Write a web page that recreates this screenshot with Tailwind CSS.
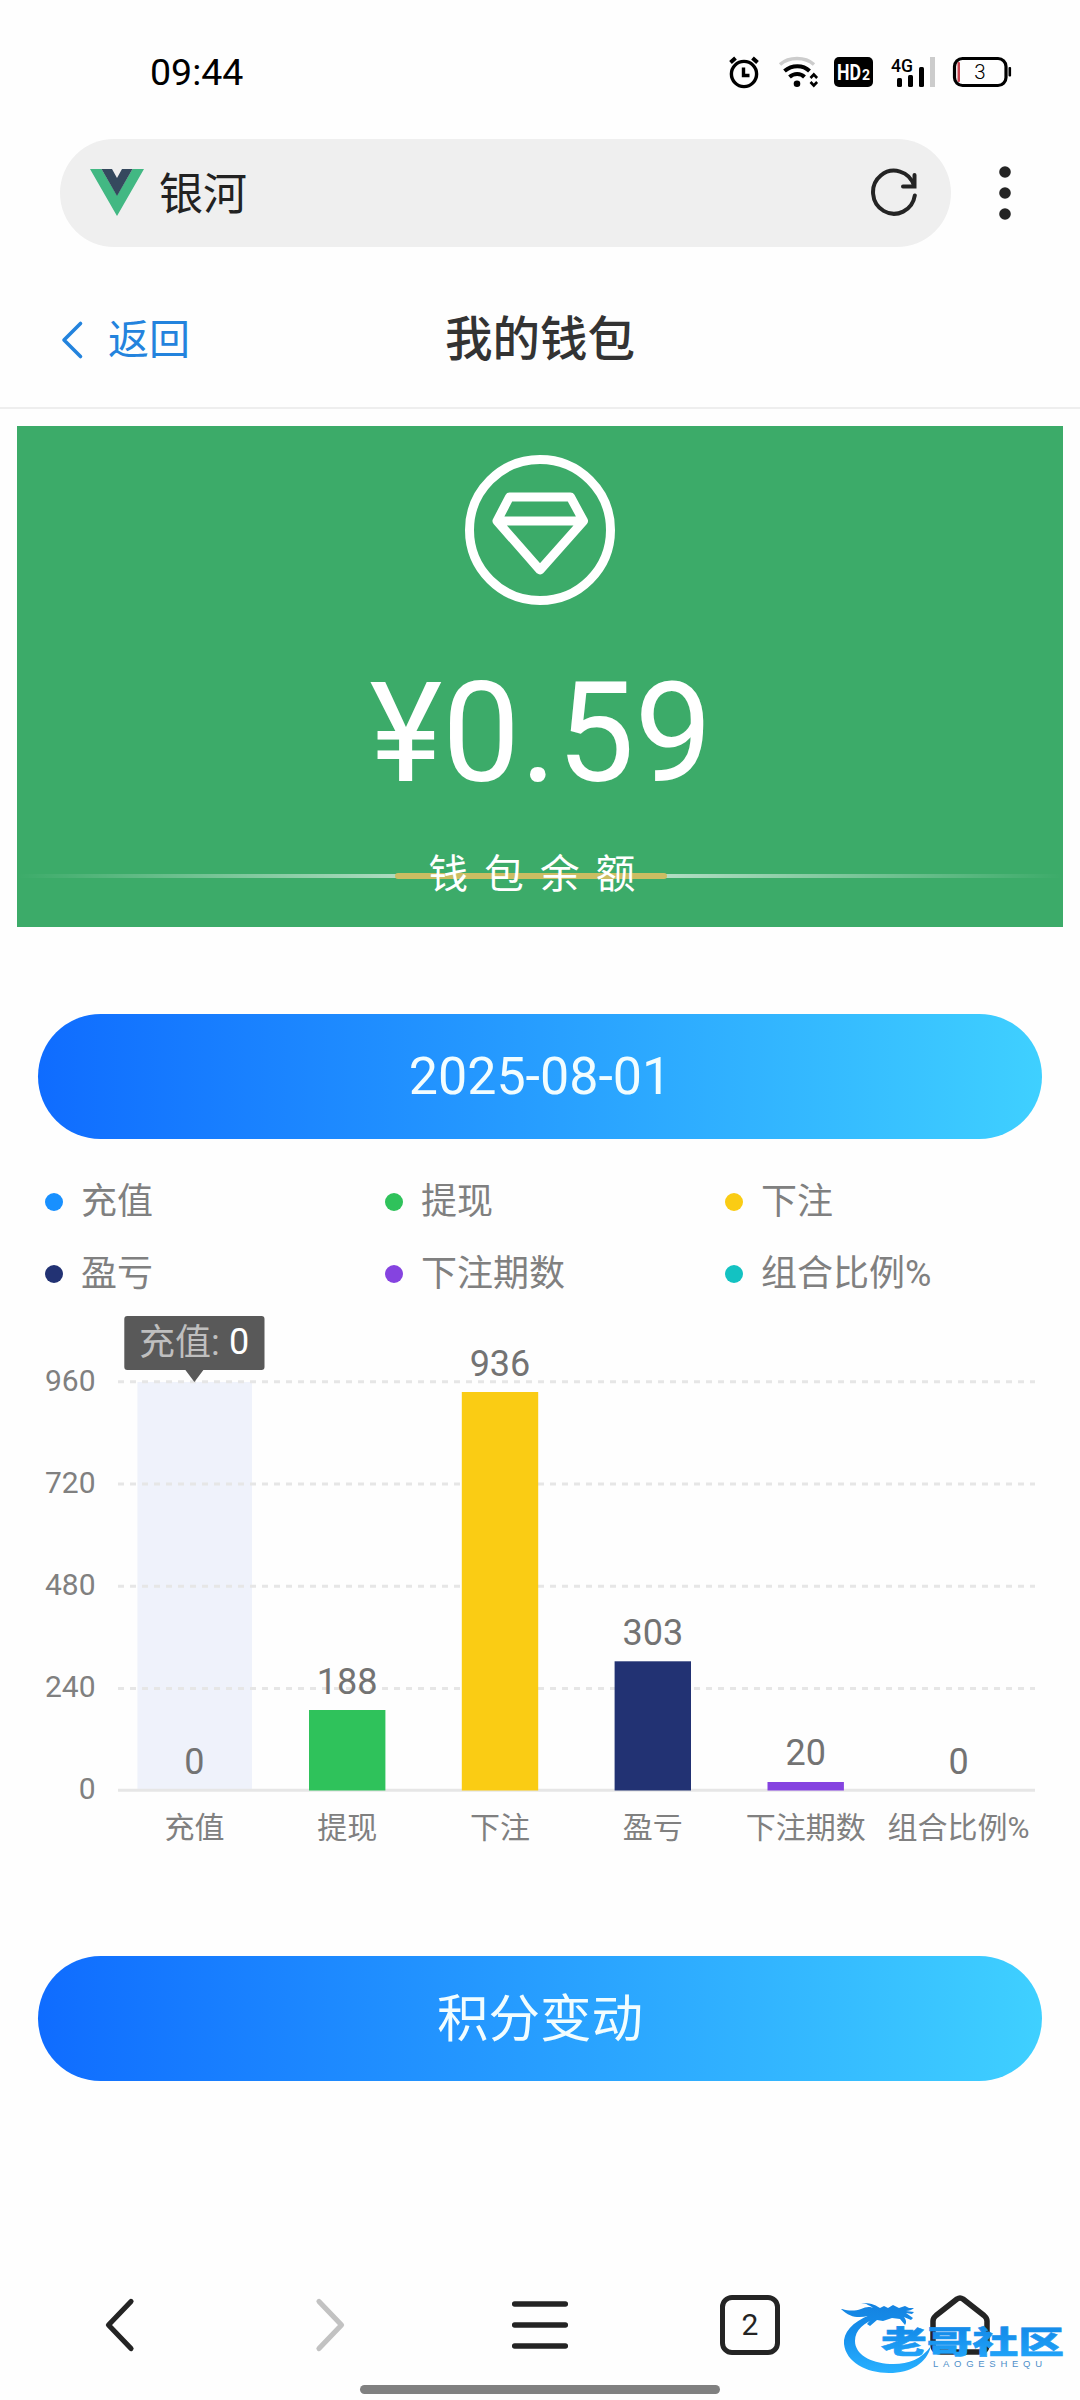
<!DOCTYPE html>
<html lang="zh-CN">
<head>
<meta charset="utf-8">
<title>我的钱包</title>
<script src="https://cdn.jsdelivr.net/npm/@tailwindcss/browser@4"></script>
</head>
<body class="bg-[#fefefe]">
<div class="relative flex h-[2400px] w-[1080px] flex-col overflow-hidden bg-[#fefefe] font-['Roboto','Noto_Sans_CJK_SC',sans-serif]">

  <!-- status bar -->
  <div class="flex h-[139px] shrink-0 items-start justify-between pl-[150px] pr-[66px]">
    <div class="mt-[45px] text-[37.500px] leading-[54px] text-black">09:44</div>
    <svg class="mt-[50px]" width="290" height="44" viewBox="724 50 290 44" fill="none">
      <g stroke="#000" stroke-width="3.4">
        <circle cx="744" cy="74" r="12.6"/>
        <path d="M743.5 67.500v8h6"/>
        <path d="M730.500 62.500l5-4.500M757.500 62.500l-5-4.500" stroke-width="4"/>
      </g>
      <path d="M780 64.500c9-8 25-8 34 0" stroke="#ccc" stroke-width="3.500"/>
      <path d="M784.500 71c7.500-6.500 18.500-6.500 25 0M789.500 77c4.500-4 11-4 15 0" stroke="#000" stroke-width="4"/>
      <circle cx="797" cy="83.700" r="3.300" fill="#000"/>
      <path d="M810.500 78l3.300-3.500 3.300 3.500M810.500 82l3.300 3.500 3.300-3.500" stroke="#000" stroke-width="2.600"/>
      <rect x="834" y="57" width="39" height="30" rx="5" fill="#000"/>
      <text x="837" y="80" font-size="22" font-weight="700" fill="#fff" textLength="24" lengthAdjust="spacingAndGlyphs">HD</text>
      <text x="862" y="79.500" font-size="14" font-weight="700" fill="#fff">2</text>
      <text x="891" y="71.500" font-size="19" font-weight="500" fill="#000" textLength="22" lengthAdjust="spacingAndGlyphs">4G</text>
      <g fill="#000">
        <rect x="897" y="78" width="5" height="9" rx="1.500"/><rect x="908" y="75" width="5" height="12" rx="1.500"/><rect x="919" y="67" width="5" height="20" rx="1.500"/>
      </g>
      <rect x="930" y="57" width="5" height="30" fill="#ccc"/>
      <rect x="954.500" y="58.500" width="51.500" height="27" rx="8" stroke="#000" stroke-width="3.200"/>
      <rect x="1008.500" y="67" width="2.600" height="9.500" rx="1" fill="#000"/>
      <rect x="957.500" y="62" width="2.500" height="20" rx="1" fill="#c8434f"/>
      <text x="980" y="79" font-size="20.500" font-weight="300" text-anchor="middle" fill="#000">3</text>
    </svg>
  </div>

  <!-- address bar -->
  <div class="flex h-[108px] shrink-0 items-center pl-[60px]">
    <div class="flex h-full w-[891px] items-center rounded-full bg-[#efefef] pl-[30px] pr-[32px]">
      <svg class="mb-[2px]" width="54" height="47" viewBox="0 0 54 47"><path d="M0 0h11.500L27 26.500 42.500 0H54L27 47z" fill="#42b883"/><path d="M11.500 0h10.500l5 9 5-9h10.500L27 27z" fill="#35495e"/></svg>
      <div class="ml-[15px] mt-[4px] text-[44px] leading-[60px] text-[#222]">银河</div>
      <svg class="ml-auto" width="50" height="50" viewBox="869 168 50 50" fill="none" stroke="#242424" stroke-width="4" stroke-linecap="round">
        <path d="M914.800 195.500A21 21.500 0 1 1 914 185.500"/><path d="M914.500 175v11.500h-11.500"/>
      </svg>
    </div>
    <svg class="ml-[47px]" width="14" height="56" fill="#242424"><circle cx="7" cy="7" r="5.800"/><circle cx="7" cy="28" r="5.800"/><circle cx="7" cy="49" r="5.800"/></svg>
  </div>

  <!-- page header -->
  <div class="grid h-[162px] shrink-0 grid-cols-3 items-center border-b-2 border-[#eee] pt-[25px]">
    <div class="flex items-center pl-[60px] text-[#2383dd]">
      <svg width="24" height="40" viewBox="0 0 24 40" fill="none" stroke="currentColor" stroke-width="3.600" stroke-linecap="round" stroke-linejoin="round"><path d="M20.500 3.500L4 20l16.500 16.500"/></svg>
      <span class="ml-[24px] text-[41px] leading-[60px]">返回</span>
    </div>
    <h1 class="text-center text-[47.500px] font-medium leading-[60px] text-[#333]">我的钱包</h1>
  </div>

  <!-- balance card -->
  <section class="mx-[17px] mt-[17px] flex h-[501px] shrink-0 flex-col items-center bg-[#3cab69] pt-[29px] text-white">
    <svg width="150" height="150" viewBox="465 455 150 150" fill="none" stroke="currentColor" stroke-width="9" stroke-linejoin="round">
      <circle cx="540" cy="530" r="70.500"/><path d="M509.500 497h61l13 24L540 570l-43-49zM496 521h88"/>
    </svg>
    <div class="ml-[2px] mt-[49px] text-[138.500px] leading-[160px]">¥0.59</div>
    <div class="relative mt-[26px] flex h-[70px] w-full items-center justify-center">
      <div class="absolute left-0 top-[34px] h-[4px] w-full bg-linear-to-r/srgb from-white/0 via-white/80 to-white/0"></div>
      <div class="absolute left-[378px] top-[33px] h-[6px] w-[272px] rounded-sm bg-[#cbbd62]"></div>
      <div class="relative text-[39.500px] leading-[60px] tracking-[16.200px]">钱包余额</div>
    </div>
  </section>

  <button class="mx-[38px] mt-[87px] h-[125px] shrink-0 rounded-full bg-linear-to-r/srgb from-[#0f6cff] to-[#3fd0ff] text-[52px] leading-[60px] text-[#f2fdff]">2025-08-01</button>

  <!-- legend -->
  <ul class="mt-[27px] grid shrink-0 grid-cols-[340px_340px_340px] pl-[45px] text-[36px] leading-[72px] text-[#808080]">
    <li class="flex items-center gap-[18px]"><i class="size-[18px] rounded-full bg-[#1890ff]"></i>充值</li>
    <li class="flex items-center gap-[18px]"><i class="size-[18px] rounded-full bg-[#2fc25b]"></i>提现</li>
    <li class="flex items-center gap-[18px]"><i class="size-[18px] rounded-full bg-[#facc14]"></i>下注</li>
    <li class="flex items-center gap-[18px]"><i class="size-[18px] rounded-full bg-[#223273]"></i>盈亏</li>
    <li class="flex items-center gap-[18px]"><i class="size-[18px] rounded-full bg-[#8543e0]"></i>下注期数</li>
    <li class="flex items-center gap-[18px]"><i class="size-[18px] rounded-full bg-[#13c2c2]"></i>组合比例%</li>
  </ul>

  <!-- bar chart -->
  <svg class="shrink-0" width="1080" height="560" viewBox="0 1310 1080 560">
    <rect x="137.400" y="1382" width="114.600" height="408" fill="#eff2fb"/>
    <g stroke="#e6e6e6" stroke-width="3">
      <path d="M118 1381.700H1035M118 1484H1035M118 1586.200H1035M118 1688.500H1035" stroke-dasharray="6 6"/>
      <path d="M118 1790.300H1035"/>
    </g>
    <rect x="309" y="1710" width="76.400" height="80.500" fill="#2fc25b"/>
    <rect x="461.800" y="1392" width="76.400" height="398.500" fill="#facc14"/>
    <rect x="614.600" y="1661.300" width="76.400" height="129.200" fill="#223273"/>
    <rect x="767.500" y="1782" width="76.400" height="8.500" fill="#8543e0"/>
    <g font-size="30" fill="#808080" text-anchor="end">
      <text x="95.500" y="1390.500">960</text><text x="95.500" y="1492.800">720</text><text x="95.500" y="1595">480</text><text x="95.500" y="1697.200">240</text><text x="95.500" y="1799">0</text>
    </g>
    <g font-size="36" fill="#737373" text-anchor="middle">
      <text x="194.400" y="1773.500">0</text><text x="347.200" y="1693.500">188</text><text x="500" y="1375.500">936</text><text x="652.800" y="1644.500">303</text><text x="805.700" y="1765">20</text><text x="958.500" y="1773.500">0</text>
    </g>
    <g font-size="30" fill="#808080" text-anchor="middle">
      <text x="194.400" y="1837.500">充值</text><text x="347.200" y="1837.500">提现</text><text x="500" y="1837.500">下注</text><text x="652.800" y="1837.500">盈亏</text><text x="805.700" y="1837.500">下注期数</text><text x="958.500" y="1837.500">组合比例%</text>
    </g>
    <path d="M127.300 1316h134.200a3 3 0 0 1 3 3v48a3 3 0 0 1-3 3H203.400l-9 12-9-12H127.300a3 3 0 0 1-3-3v-48a3 3 0 0 1 3-3z" fill="#595959"/>
    <text x="139" y="1354.500" font-size="36" fill="#bfbfbf">充值:</text>
    <text x="229" y="1354" font-size="36" fill="#fff">0</text>
  </svg>

  <button class="mx-[38px] mt-[86px] h-[125px] shrink-0 rounded-full bg-linear-to-r/srgb from-[#0f6cff] to-[#3fd0ff] pt-[2px] text-[51.500px] leading-[60px] text-[#f2fdff]">积分变动</button>

  <!-- browser toolbar -->
  <nav class="mt-[204px] flex h-[80px] shrink-0 items-center justify-between px-[90px] text-[#242424]">
    <svg width="60" height="60" viewBox="0 0 60 60" fill="none" stroke="currentColor" stroke-width="5.200" stroke-linecap="round" stroke-linejoin="round"><path d="M41 6.500L18.500 30 41 53.500"/></svg>
    <svg width="60" height="60" viewBox="0 0 60 60" fill="none" stroke="#c2c2c2" stroke-width="5.200" stroke-linecap="round" stroke-linejoin="round"><path d="M19 6.500L41.500 30 19 53.500"/></svg>
    <svg width="60" height="60" viewBox="0 0 60 60" fill="none" stroke="currentColor" stroke-width="5.500" stroke-linecap="round"><path d="M4.700 9h50.600M4.700 30h50.600M4.700 51h50.600"/></svg>
    <div class="flex size-[60px] items-center justify-center rounded-[12px] border-[5.500px] border-[#242424] text-[30px] leading-[40px]">2</div>
    <svg width="60" height="60" viewBox="0 0 60 60" fill="none" stroke="currentColor" stroke-width="5.500" stroke-linejoin="round"><path d="M27 4Q30 2 33 4L54 20.500Q57 23 57 26V49Q57 57 49 57H11Q3 57 3 49V26Q3 23 6 20.500Z"/></svg>
  </nav>
  <div class="mx-auto mt-[20px] h-[9px] w-[360px] shrink-0 rounded-full bg-[#808080]"></div>

  <!-- watermark -->
  <svg class="absolute left-[838px] top-[2292px]" width="232" height="88" viewBox="838 2292 232 88">
    <defs><linearGradient id="wm" x1="0" y1="2302" x2="0" y2="2372" gradientUnits="userSpaceOnUse"><stop offset="0" stop-color="#1482e0"/><stop offset=".45" stop-color="#168fec"/><stop offset="1" stop-color="#27b0ff"/></linearGradient></defs>
    <g fill="url(#wm)">
      <path d="M870 2315C852 2322 843 2333 844 2344C846 2362 866 2373 889 2373C911 2373 927 2363 931 2346C921 2360 906 2365 890 2364C870 2363 855 2354 855 2341C855 2330 864 2322 878 2318Z"/>
      <path d="M842 2309c7 2 13 2 19 0 5-2 9-3 14 0-5-3-9-6-14-6 9 0 13 1 19 5l4-2 4 2 5-3 6 3 6-2 4 2h5c-2 2-5 3-8 3l8 1-2 2-6-1 7 5-2 2-7-3c2 3 3 5 1 8l-5-6-8-1-9 3-6-1-7 6-3-2 6-7-9 4 4-5c-9 2-18 2-27-7z"/>
      <text x="881" y="2352.500" font-size="31" font-weight="900" font-family="'Noto Sans CJK SC',sans-serif" textLength="183" lengthAdjust="spacingAndGlyphs" stroke="url(#wm)" stroke-width=".6">老哥社区</text>
      <text x="933" y="2367" font-size="9.500" font-family="'Liberation Sans',sans-serif" textLength="109" lengthAdjust="spacing" fill="#4e8fc9">LAOGESHEQU</text>
    </g>
  </svg>
</div>
</body>
</html>
